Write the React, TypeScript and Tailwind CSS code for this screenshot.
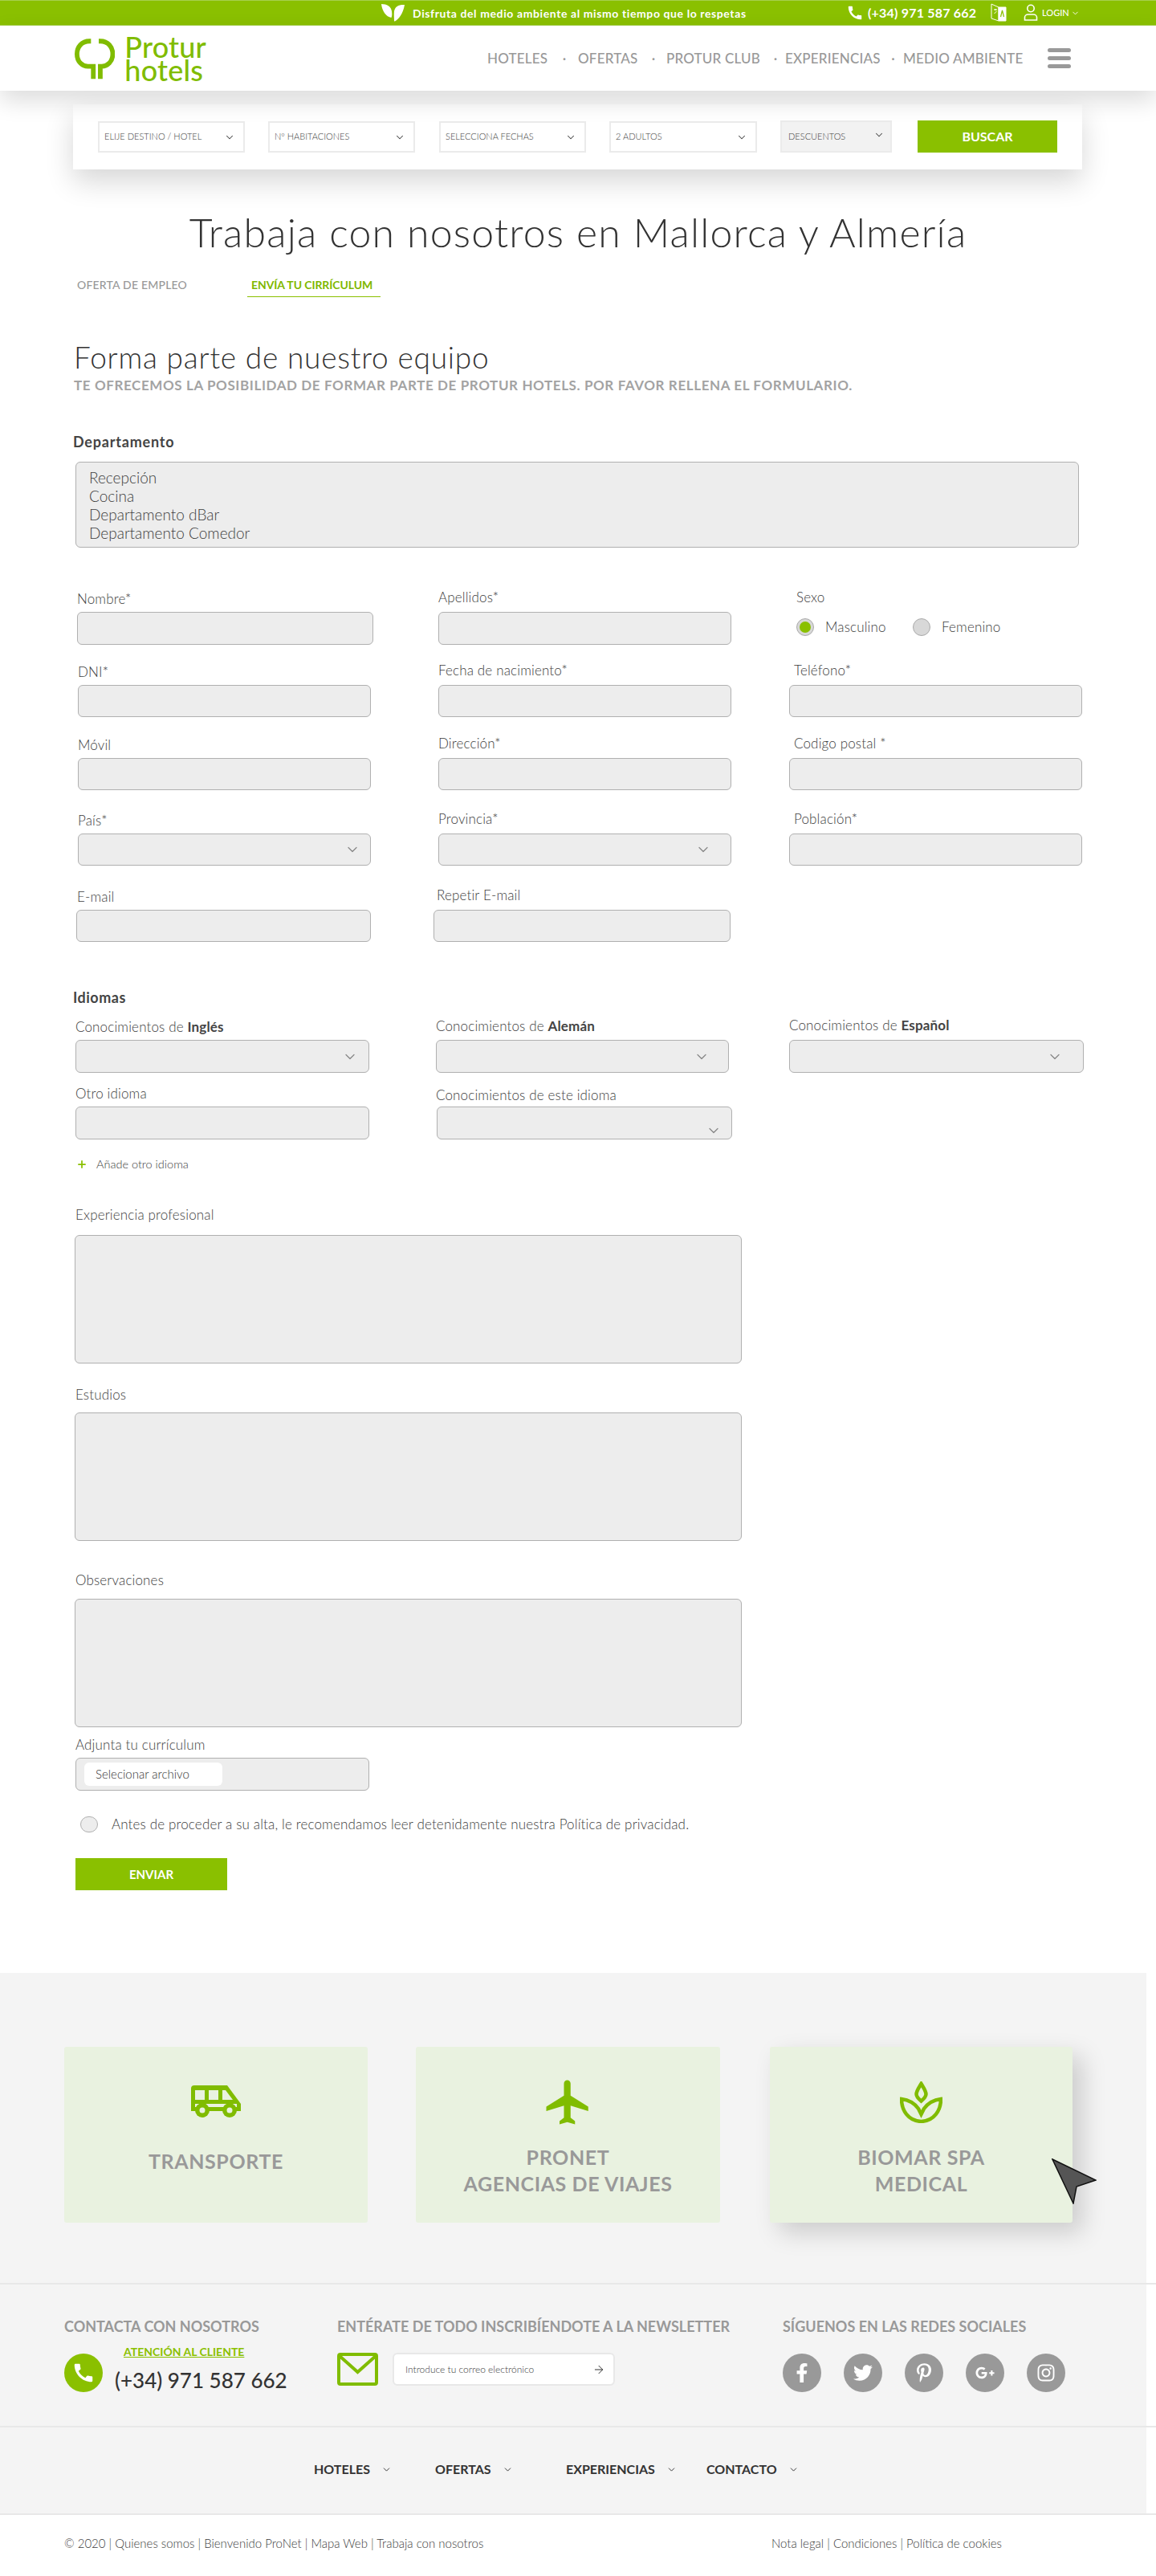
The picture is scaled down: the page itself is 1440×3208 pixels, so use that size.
import { ArrowRight, ChevronDown, Plus } from 'lucide-react'
import { FaFacebookF, FaGooglePlusG, FaInstagram, FaPinterestP, FaTwitter } from 'react-icons/fa'
import { MdCall, MdFlight } from 'react-icons/md'

const boxBase = 'block rounded-[6px] border border-[#b0b0b0] bg-[#ededed]'

function Field({
  label,
  labelClass = '',
  boxClass,
  selectClass,
}: {
  label: React.ReactNode
  labelClass?: string
  boxClass: string
  selectClass?: string
}) {
  return (
    <div className="flex flex-col justify-end">
      <label className={`text-[17px] leading-5 font-light text-[#3d3d3d] whitespace-nowrap tracking-[0.15px] ${labelClass}`}>{label}</label>
      {selectClass ? (
        <div className={`${boxBase} ${boxClass} flex items-center justify-end ${selectClass}`}>
          <ChevronDown size={20} strokeWidth={1.5} className="text-[#888]" />
        </div>
      ) : (
        <input className={`${boxBase} ${boxClass}`} />
      )}
    </div>
  )
}

function SearchSelect({ text, className }: { text: string; className: string }) {
  return (
    <div className={`flex items-center justify-between h-[39px] border-2 border-[#ebebeb] pl-[6px] pr-[10px] ${className}`}>
      <span className="text-[11px] font-light text-[#3d3d3d] whitespace-nowrap">{text}</span>
      <ChevronDown size={14} strokeWidth={1.75} className="text-[#444]" />
    </div>
  )
}

function TopBar() {
  return (
    <div className="flex items-center h-[32px] pl-[475px] bg-[#8ac000] border-y border-y-[#a6d04d] text-white whitespace-nowrap">
      <svg width="29" height="24" viewBox="0 0 29 24" fill="white">
        <path d="M0 1c7 0 12 3 13 9 .4 3 .4 6-.5 8C6 17 1 10 0 1z" />
        <path d="M29 2c-7-.5-12 2-13 8-.5 4 0 9 0 12 1 1 0 1 0 1 6-3 11-10 13-21z" />
      </svg>
      <span className="w-[416px] ml-[10px] text-[14px] font-bold tracking-[0.6px]">Disfruta del medio ambiente al mismo tiempo que lo respetas</span>
      <MdCall size={22} className="ml-[124px]" />
      <span className="w-[131px] ml-[5px] text-[16px] font-bold tracking-[0.2px]">(+34) 971 587 662</span>
      <svg width="20" height="28" viewBox="0 0 20 28" fill="none" stroke="white" className="ml-[22px]">
        <path d="M1 3l9 4v17l-9-3z" strokeWidth="1" />
        <path d="M10 7h9v17h-9z" fill="white" />
        <path d="M4 10h4M6 9v2M4.5 15l3-3" strokeWidth="1" />
        <path d="M12.5 19l2-8 2 8" stroke="#8ac000" strokeWidth="1.2" />
      </svg>
      <svg width="18" height="24" viewBox="0 0 18 24" fill="none" stroke="white" strokeWidth="1.6" className="ml-[21px]">
        <circle cx="9" cy="6.5" r="4.2" />
        <path d="M1.5 21v-3.5c0-2 2-3.5 4-3.5h7c2 0 4 1.500 4 3.500V21z" />
      </svg>
      <span className="ml-[5px] text-[11px] w-[36px] font-medium">LOGIN</span>
      <ChevronDown size={11} strokeWidth={2} />
    </div>
  )
}

function Logo() {
  return (
    <div className="flex items-center w-[164px]">
      <svg width="52" height="52" viewBox="0 0 52 52" fill="none" stroke="#80bc00" strokeWidth="6">
        <path d="M21 3.500H19C9 3.500 3 11 3 20C3 30 10 36 17 36H24V52" />
        <path d="M31 3.500H33C43 3.500 49 11 49 20C49 30 42 36 35 36H33V52" />
      </svg>
      <div className="ml-[12px] text-[36px] leading-[29px] font-medium text-[#80bc00] tracking-[0.2px]">
        <div>Protur</div>
        <div>hotels</div>
      </div>
    </div>
  )
}

function Header() {
  return (
    <header className="relative z-10 flex items-center h-[81px] pl-[93px] bg-white shadow-[0_12px_30px_rgba(0,0,0,0.14)]">
      <Logo />
      <nav className="flex items-center ml-[350px] text-[17px] font-medium text-[#999] whitespace-nowrap tracking-[0.2px]">
        <span className="w-[79px]">HOTELES</span>
        <span className="w-[34px] text-center">·</span>
        <span className="w-[78px]">OFERTAS</span>
        <span className="w-[32px] text-center">·</span>
        <span className="w-[124px]">PROTUR CLUB</span>
        <span className="w-[24px] text-center">·</span>
        <span className="w-[122px]">EXPERIENCIAS</span>
        <span className="w-[25px] text-center">·</span>
        <span className="w-[149px]">MEDIO AMBIENTE</span>
      </nav>
      <div className="flex flex-col gap-[5px] ml-[31px] w-[29px]">
        <span className="h-[5px] rounded-full bg-[#999]" />
        <span className="h-[5px] rounded-full bg-[#999]" />
        <span className="h-[5px] rounded-full bg-[#999]" />
      </div>
    </header>
  )
}

function SearchBar() {
  return (
    <div className="flex items-center h-[81px] w-[1257px] ml-[91px] mt-[17px] pl-[31px] bg-white shadow-[0_15px_35px_rgba(0,0,0,0.16)]">
      <SearchSelect text="ELIJE DESTINO / HOTEL" className="w-[183px]" />
      <SearchSelect text="Nº HABITACIONES" className="w-[183px] ml-[29px]" />
      <SearchSelect text="SELECCIONA FECHAS" className="w-[183px] ml-[30px]" />
      <SearchSelect text="2 ADULTOS" className="w-[184px] ml-[29px]" />
      <div className="flex items-center justify-between h-[40px] w-[139px] ml-[29px] -mt-[2px] border-2 border-[#ebebeb] bg-[#f2f2f2] pl-[8px] pr-[7px]">
        <span className="text-[11px] font-light text-[#3d3d3d] mt-[1px]">DESCUENTOS</span>
        <ChevronDown size={14} strokeWidth={1.75} className="text-[#444] -mt-[3px]" />
      </div>
      <button className="h-[40px] w-[174px] ml-[32px] -mt-[2px] bg-[#8ac000] text-white text-[16px] font-bold">BUSCAR</button>
    </div>
  )
}

function PersonalForm() {
  return (
    <>
      <div className="grid grid-cols-[450px_437px_365px] items-end pl-[96px] mt-[52px]">
        <Field label="Nombre*" labelClass="mb-[6px]" boxClass="h-[41px] w-[369px]" />
        <Field label="Apellidos*" labelClass="mb-[8px]" boxClass="h-[41px] w-[365px]" />
        <div>
          <div className="text-[17px] leading-5 font-light text-[#3d3d3d] tracking-[0.15px] ml-[9px] mb-[15px]">Sexo</div>
          <div className="flex items-center ml-[9px] h-[24px] text-[17px] font-light text-[#3d3d3d] tracking-[0.15px]">
            <span className="flex items-center justify-center w-[22px] h-[22px] rounded-full bg-[#d8d8d8] border border-[#aaa]">
              <span className="w-[14px] h-[14px] rounded-full bg-[#8ac000]" />
            </span>
            <span className="w-[109px] ml-[14px]">Masculino</span>
            <span className="w-[22px] h-[22px] rounded-full bg-[#d8d8d8] border border-[#aaa]" />
            <span className="ml-[14px]">Femenino</span>
          </div>
          <div className="h-[10px]" />
        </div>
      </div>
      <div className="grid grid-cols-[450px_437px_365px] items-end pl-[96px] mt-[22px]">
        <Field label="DNI*" labelClass="mb-[6px] ml-px" boxClass="h-[40px] w-[365px] ml-px" />
        <Field label="Fecha de nacimiento*" labelClass="mb-[8px]" boxClass="h-[40px] w-[365px]" />
        <Field label="Teléfono*" labelClass="mb-[8px] ml-[6px]" boxClass="h-[40px] w-[365px]" />
      </div>
      <div className="grid grid-cols-[450px_437px_365px] items-end pl-[96px] mt-[23px]">
        <Field label="Móvil" labelClass="mb-[6px] ml-px" boxClass="h-[40px] w-[365px] ml-px" />
        <Field label="Dirección*" labelClass="mb-[8px]" boxClass="h-[40px] w-[365px]" />
        <Field label="Codigo postal *" labelClass="mb-[8px] ml-[6px]" boxClass="h-[40px] w-[365px]" />
      </div>
      <div className="grid grid-cols-[450px_437px_365px] items-end pl-[96px] mt-[26px]">
        <Field label="País*" labelClass="mb-[6px] ml-px" boxClass="h-[40px] w-[365px] ml-px" selectClass="pr-[12px]" />
        <Field label="Provincia*" labelClass="mb-[8px]" boxClass="h-[40px] w-[365px]" selectClass="pr-[24px]" />
        <Field label="Población*" labelClass="mb-[8px] ml-[6px]" boxClass="h-[40px] w-[365px]" />
      </div>
      <div className="grid grid-cols-[450px_437px_365px] items-end pl-[96px] mt-[27px]">
        <Field label="E-mail" labelClass="mb-[6px]" boxClass="h-[40px] w-[367px] -ml-px" />
        <Field label="Repetir E-mail" labelClass="mb-[8px] -ml-[2px]" boxClass="h-[40px] w-[370px] -ml-[6px]" />
      </div>
    </>
  )
}

function LanguagesForm() {
  return (
    <>
      <div className="text-[18px] leading-5 font-bold text-[#444] tracking-[0.5px] ml-[91px] mt-[59px]">Idiomas</div>
      <div className="grid grid-cols-[449px_440px_367px] items-end pl-[94px] mt-[15px]">
        <Field label={<>Conocimientos de <b className="font-bold text-[#444]">Inglés</b></>} labelClass="mb-[6px]" boxClass="h-[41px] w-[366px]" selectClass="pr-[13px]" />
        <Field label={<>Conocimientos de <b className="font-bold text-[#444]">Alemán</b></>} labelClass="mb-[7px]" boxClass="h-[41px] w-[365px]" selectClass="pr-[23px]" />
        <Field label={<>Conocimientos de <b className="font-bold text-[#444]">Español</b></>} labelClass="mb-[8px]" boxClass="h-[41px] w-[367px]" selectClass="pr-[25px]" />
      </div>
      <div className="grid grid-cols-[449px_440px_367px] items-end pl-[94px] mt-[16px]">
        <Field label="Otro idioma" labelClass="mb-[6px]" boxClass="h-[41px] w-[366px]" />
        <Field label="Conocimientos de este idioma" labelClass="mb-[4px]" boxClass="h-[41px] w-[368px] ml-px pt-[18px]" selectClass="pr-[12px]" />
      </div>
      <div className="flex items-center h-5 ml-[95px] mt-[21px] text-[14.5px] font-light text-[#3d3d3d]">
        <Plus size={14} strokeWidth={3} className="text-[#8ac000]" />
        <span className="ml-[11px]">Añade otro idioma</span>
      </div>
    </>
  )
}

function Application() {
  const textareaClass = `${boxBase} w-[831px] h-[160px] resize-none ml-[93px]`
  const labelClass = 'block text-[17px] leading-5 font-light text-[#3d3d3d] tracking-[0.15px] ml-[94px]'
  return (
    <>
      <label className={`${labelClass} mt-[43px] mb-[15px]`}>Experiencia profesional</label>
      <textarea className={textareaClass} />
      <label className={`${labelClass} mt-[29px] mb-[12px]`}>Estudios</label>
      <textarea className={textareaClass} />
      <label className={`${labelClass} mt-[39px] mb-[13px]`}>Observaciones</label>
      <textarea className={textareaClass} />
      <label className={`${labelClass} mt-[12px] mb-[6px]`}>Adjunta tu currículum</label>
      <div className={`${boxBase} flex items-center w-[366px] h-[41px] ml-[94px] pl-[10px]`}>
        <span className="flex items-center w-[172px] h-[29px] rounded-[6px] bg-white pl-[14px] text-[15px] font-light text-[#333]">Selecionar archivo</span>
      </div>
      <div className="flex items-center h-5 ml-[100px] mt-[32px]">
        <span className="w-[22px] h-[20px] rounded-full border border-[#b0b0b0] bg-[#ededed]" />
        <span className="ml-[17px] text-[17px] font-light text-[#3d3d3d] tracking-[0.15px]">Antes de proceder a su alta, le recomendamos leer detenidamente nuestra Política de privacidad.</span>
      </div>
      <button className="block w-[189px] h-[40px] ml-[94px] mt-[32px] bg-[#8ac000] text-white text-[15px] font-bold">ENVIAR</button>
    </>
  )
}

function Bus() {
  return (
    <svg width="63" height="40" viewBox="0 0 63 40" className="mt-[5px]">
      <path d="M4 0h41l17 23v9H0V4a4 4 0 0 1 4-4z" fill="#80bc00" />
      <rect x="5" y="6" width="12" height="12" fill="#e9f2e0" />
      <rect x="22" y="6" width="12" height="12" fill="#e9f2e0" />
      <path d="M39 6h4l9 12H39z" fill="#e9f2e0" />
      <rect x="5" y="23" width="52" height="4" fill="#e9f2e0" />
      <circle cx="14" cy="31" r="9" fill="#80bc00" />
      <circle cx="14" cy="31" r="3.500" fill="#e9f2e0" />
      <circle cx="48" cy="31" r="9" fill="#80bc00" />
      <circle cx="48" cy="31" r="3.500" fill="#e9f2e0" />
    </svg>
  )
}

function Sprout() {
  return (
    <svg width="53" height="52" viewBox="0 0 53 52" fill="none" stroke="#80bc00" strokeWidth="4.500">
      <path d="M26.500 3c-3 5-6 9-6 13 0 3 3 6 6 8.500 3-2.500 6-5.500 6-8.500 0-4-3-8-6-13z" />
      <path d="M2 22c8 1 16 5 21 12l3.500 7L30 34c5-7 13-11 21-12 0 14-8 27-24.500 28C10 49 2 36 2 22z" />
    </svg>
  )
}

function Cards() {
  const title = 'text-[25px] leading-[33px] font-bold text-[#999] tracking-[0.6px] text-center whitespace-nowrap'
  return (
    <div className="flex w-[1428px] h-[386px] pt-[92px] pl-[80px] bg-[#f4f4f4]">
      <div className="flex flex-col items-center w-[378px] h-[219px] pt-[43px] rounded-[3px] bg-[#e9f2e0]">
        <div className="h-[52px]"><Bus /></div>
        <div className={`mt-[31px] ${title}`}>TRANSPORTE</div>
      </div>
      <div className="flex flex-col items-center w-[379px] h-[219px] ml-[60px] pt-[43px] rounded-[3px] bg-[#e9f2e0]">
        <MdFlight size={66} className="text-[#80bc00] -my-[7px]" />
        <div className={`mt-[26px] ${title}`}>PRONET<br />AGENCIAS DE VIAJES</div>
      </div>
      <div className="relative flex flex-col items-center w-[377px] h-[219px] ml-[62px] pt-[43px] rounded-[3px] bg-[#e9f2e0] shadow-[12px_12px_30px_rgba(0,0,0,0.17)]">
        <Sprout />
        <div className={`mt-[26px] ${title}`}>BIOMAR SPA<br />MEDICAL</div>
        <svg width="56" height="57" viewBox="0 0 56 57" className="absolute left-[351px] top-[139px]">
          <path d="M1 1l54 26-24 8-4 21z" fill="#555" stroke="#111" strokeWidth="1.500" />
        </svg>
      </div>
    </div>
  )
}

function Contact() {
  const heading = 'text-[18px] leading-5 font-bold text-[#999] whitespace-nowrap'
  const socials = [FaFacebookF, FaTwitter, FaPinterestP, FaGooglePlusG, FaInstagram]
  return (
    <div className="flex w-[1428px] h-[176px] pt-[42px] pl-[80px] bg-[#f4f4f4]">
      <div className="w-[340px]">
        <div className={heading}>CONTACTA CON NOSOTROS</div>
        <div className="flex mt-[14px]">
          <span className="flex items-center justify-center w-[48px] h-[48px] mt-[10px] rounded-full bg-[#8ac000]">
            <MdCall size={30} className="text-white" />
          </span>
          <div className="ml-[15px]">
            <div className="ml-[11px] h-[16px] text-[14px] leading-4 font-bold text-[#8ac000] underline">ATENCIÓN AL CLIENTE</div>
            <div className="mt-[11px] text-[26px] leading-8 font-medium text-[#333] whitespace-nowrap">(+34) 971 587 662</div>
          </div>
        </div>
      </div>
      <div className="w-[555px]">
        <div className={heading}>ENTÉRATE DE TODO INSCRIBÍENDOTE A LA NEWSLETTER</div>
        <div className="flex mt-[23px]">
          <svg width="51" height="41" viewBox="0 0 51 41" fill="none" stroke="#80bc00" strokeWidth="4">
            <rect x="2" y="2" width="47" height="37" rx="2" />
            <path d="M3 4l22.500 20L48 4" />
          </svg>
          <div className="flex items-center justify-between w-[277px] h-[41px] ml-[18px] pl-[14px] pr-[10px] rounded-[6px] border-2 border-[#e8e8e8] bg-white">
            <span className="text-[12px] font-light text-[#3d3d3d]">Introduce tu correo electrónico</span>
            <ArrowRight size={16} strokeWidth={1.5} className="text-[#333]" />
          </div>
        </div>
      </div>
      <div>
        <div className={heading}>SÍGUENOS EN LAS REDES SOCIALES</div>
        <div className="flex gap-[28px] mt-[24px]">
          {socials.map((Icon, i) => (
            <span key={i} className="flex items-center justify-center w-[48px] h-[48px] rounded-full bg-[#999]">
              <Icon size={24} className="text-white" />
            </span>
          ))}
        </div>
      </div>
    </div>
  )
}

function FooterNav() {
  const chevron = <ChevronDown size={13} strokeWidth={1.75} className="ml-[14px] text-[#333]" />
  return (
    <div className="flex items-center w-[1428px] h-[107px] pb-[3px] pl-[391px] bg-[#f4f4f4] text-[16px] font-bold text-[#333] whitespace-nowrap">
      <div className="flex items-center w-[151px]">HOTELES{chevron}</div>
      <div className="flex items-center w-[163px]">OFERTAS{chevron}</div>
      <div className="flex items-center w-[175px]">EXPERIENCIAS{chevron}</div>
      <div className="flex items-center">CONTACTO{chevron}</div>
    </div>
  )
}

export default function App() {
  return (
    <div className="w-[1440px] h-[3208px] overflow-hidden bg-white font-['Lato',sans-serif]">
      <TopBar />
      <Header />
      <SearchBar />
      <h1 className="mt-[48px] text-center text-[50px] leading-[60px] font-light text-[#333] tracking-[1.2px]">Trabaja con nosotros en Mallorca y Almería</h1>
      <div className="flex mt-[26px] pl-[96px] text-[14px] leading-5 font-medium">
        <span className="w-[212px] text-[#999] tracking-[0.2px]">OFERTA DE EMPLEO</span>
        <span className="w-[166px] h-[25px] border-b border-[#8ac000] pl-[5px] text-[#7fb800] font-bold tracking-[-0.1px]">ENVÍA TU CIRRÍCULUM</span>
      </div>
      <h2 className="mt-[53px] ml-[92px] text-[37px] leading-[44px] font-light text-[#333] tracking-[0.8px]">Forma parte de nuestro equipo</h2>
      <p className="mt-px ml-[92px] text-[17px] leading-6 font-bold text-[#a3a3a3] tracking-[0.6px]">TE OFRECEMOS LA POSIBILIDAD DE FORMAR PARTE DE PROTUR HOTELS. POR FAVOR RELLENA EL FORMULARIO.</p>
      <div className="mt-[48px] ml-[91px] text-[18px] leading-5 font-bold text-[#444] tracking-[0.8px]">Departamento</div>
      <div className={`${boxBase} w-[1250px] h-[107px] ml-[94px] mt-[15px] pt-[7px] pl-[16px] text-[19px] leading-[23px] font-light text-[#3d3d3d]`}>
        <div>Recepción</div>
        <div>Cocina</div>
        <div>Departamento dBar</div>
        <div>Departamento Comedor</div>
      </div>
      <PersonalForm />
      <LanguagesForm />
      <Application />
      <footer className="mt-[103px]">
        <Cards />
        <div className="border-t-2 border-[#e8e8e8]"><Contact /></div>
        <div className="border-y-2 border-[#e8e8e8]"><FooterNav /></div>
        <div className="flex pt-[25px] text-[15px] leading-5 font-light text-[#3d3d3d]">
          <span className="w-[961px] pl-[80px]">© 2020 | Quienes somos | Bienvenido ProNet | Mapa Web | Trabaja con nosotros</span>
          <span>Nota legal | Condiciones | Política de cookies</span>
        </div>
      </footer>
    </div>
  )
}
